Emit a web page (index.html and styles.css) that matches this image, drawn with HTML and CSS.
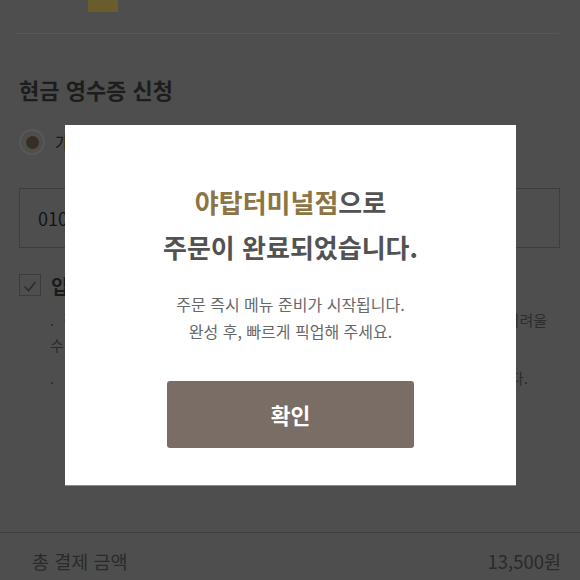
FILE: index.html
```html
<!DOCTYPE html>
<html lang="ko">
<head>
<meta charset="utf-8">
<title>주문 완료</title>
<link rel="stylesheet" href="styles.css">
</head>
<body>
<div class="page">
  <div class="top"><div class="thumb"></div></div>
  <section class="receipt">
    <h2 class="title">현금 영수증 신청</h2>
    <div class="radio-row">
      <span class="radio"><span class="dot"></span></span>
      <span class="radio-label">개인 소득공제용</span>
    </div>
    <div class="field">010-1234-5678</div>
    <div class="check-row">
      <span class="checkbox"><svg width="22" height="22" viewBox="0 0 22 22"><polyline points="5,11.5 9.5,16 17,6.5" fill="none" stroke="#2a2a2a" stroke-width="1.6"/></svg></span>
      <span class="check-label">입력한 정보 다음에도 사용</span>
    </div>
    <ul class="notes">
      <li><span class="just w1">. 결제 완료 후에는 현금 영수증 신청 정보 및 발급 유형의 변경이 어려울</span><span class="line">수 있습니다.</span></li>
      <li><span class="just w2">. 관련 문의는 해당 매장 또는 고객센터로 연락해 주시기 바랍니다.</span></li>
    </ul>
  </section>
  <footer class="total">
    <span>총 결제 금액</span>
    <span>13,500원</span>
  </footer>
</div>
<div class="modal">
  <h1 class="modal-title"><span class="store">야탑터미널점</span>으로<br>주문이 완료되었습니다.</h1>
  <p class="modal-text">주문 즉시 메뉴 준비가 시작됩니다.<br>완성 후, 빠르게 픽업해 주세요.</p>
  <button class="confirm" type="button">확인</button>
</div>
</body>
</html>
```
FILE: styles.css
```css
* { box-sizing: border-box; }
html, body { margin: 0; padding: 0; }
body {
  background: #4e4e4e;
  font-family: "Noto Sans CJK KR", "Noto Sans", sans-serif;
  width: 580px;
  height: 580px;
  overflow: hidden;
  position: relative;
}
.page {
  height: 580px;
  display: flex;
  flex-direction: column;
}
.top {
  height: 34px;
  margin: 0 21px 0 15px;
  border-bottom: 1px solid #585858;
}
.thumb {
  width: 30px;
  height: 12px;
  margin-left: 73px;
  background: #6a5d2d;
}
.receipt { padding: 0 20px 0 19px; }
.title {
  margin: 40px 0 0;
  font-size: 22px;
  line-height: 30px;
  font-weight: 700;
  color: #1d1d1d;
}
.radio-row {
  margin-top: 25px;
  height: 26px;
  display: flex;
  align-items: center;
  gap: 10px;
}
.radio {
  width: 26px;
  height: 26px;
  border-radius: 50%;
  border: 2px solid #585858;
  display: flex;
  align-items: center;
  justify-content: center;
}
.dot {
  width: 13px;
  height: 13px;
  border-radius: 50%;
  background: #352f22;
}
.radio-label { font-size: 18px; color: #1a1a1a; }
.field {
  margin-top: 33px;
  height: 60px;
  border: 1px solid #3e3e3e;
  padding-left: 18px;
  display: flex;
  align-items: center;
  font-size: 18px;
  color: #141414;
}
.check-row {
  margin-top: 26px;
  height: 22px;
  display: flex;
  align-items: center;
  gap: 10px;
}
.checkbox {
  width: 22px;
  height: 22px;
  border: 1px solid #3c3c3c;
  display: flex;
}
.checkbox svg { display: block; }
.check-label { font-size: 19px; font-weight: 700; color: #1a1a1a; }
.notes {
  list-style: none;
  margin: 11px 0 0;
  padding: 0 0 0 31px;
  font-size: 15px;
  line-height: 25px;
  color: #2c2c2c;
}
.notes li + li { margin-top: 8px; }
.just {
  display: block;
  white-space: nowrap;
  text-align: justify;
  text-align-last: justify;
}
.w1 { width: 497px; }
.w2 { width: 478px; }
.line { display: block; }
.total {
  margin-top: auto;
  height: 48px;
  border-top: 1px solid #3f3f3f;
  padding: 8px 19px 0 32px;
  display: flex;
  align-items: center;
  justify-content: space-between;
  font-size: 18.5px;
  color: #2a2a2a;
}
.modal {
  position: absolute;
  left: 65px;
  top: 125px;
  width: 451px;
  padding: 54px 0 37px;
  background: #fff;
  text-align: center;
  box-shadow: 0 1px 0 #8a8a8a;
}
.modal-title {
  margin: 0;
  font-size: 26px;
  line-height: 45px;
  font-weight: 700;
  color: #525252;
}
.store { color: #8b7545; }
.modal-text {
  margin: 22px 0 0;
  font-size: 16px;
  line-height: 27px;
  color: #686868;
}
.confirm {
  display: block;
  margin: 36px auto 0;
  width: 247px;
  height: 67px;
  border: 0;
  border-radius: 3px;
  background: #7a6d66;
  color: #fff;
  font-family: inherit;
  font-size: 21.5px;
  font-weight: 700;
}
```
